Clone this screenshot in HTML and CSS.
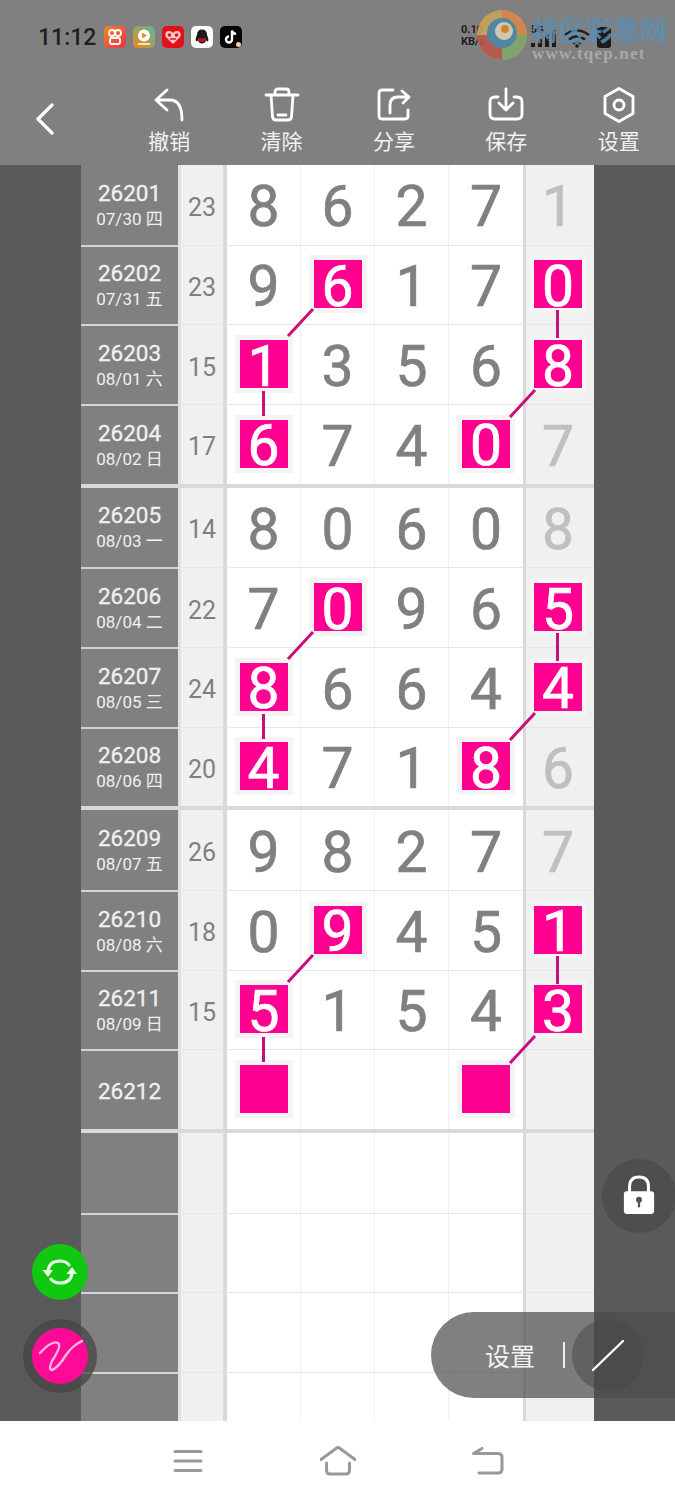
FILE: index.html
```html
<!DOCTYPE html>
<html lang="zh-CN">
<head>
  <meta charset="UTF-8">
  <title>排列走势图</title>
  <link rel="stylesheet" href="styles.css">
</head>
<body>
<div class="screen">

  <header class="topbar">
    <div class="statusbar">
      <span class="clock">11:12</span>
      <div class="app-icons">
        <svg class="app-icon" viewBox="0 0 22 22"><defs><linearGradient id="ks" x1="0" y1="0" x2="1" y2="1"><stop offset="0" stop-color="#f08a1d"/><stop offset="1" stop-color="#ee2b4f"/></linearGradient></defs><rect width="22" height="22" rx="5" fill="url(#ks)"/><circle cx="8" cy="7" r="3" fill="none" stroke="#fff" stroke-width="1.8"/><circle cx="14" cy="7" r="3" fill="none" stroke="#fff" stroke-width="1.8"/><rect x="6" y="12" width="10" height="6" rx="1.5" fill="none" stroke="#fff" stroke-width="1.8"/></svg>
        <svg class="app-icon" viewBox="0 0 22 22"><defs><linearGradient id="vd" x1="0" y1="1" x2="1" y2="0"><stop offset="0" stop-color="#f08a1d"/><stop offset="1" stop-color="#55b8a0"/></linearGradient></defs><rect width="22" height="22" rx="5" fill="url(#vd)"/><circle cx="11" cy="9.5" r="6" fill="#fff"/><path d="M9 6.5l5 3-5 3z" fill="#ef8b25"/><rect x="5" y="17" width="12" height="2" fill="#fbe3a8"/></svg>
        <svg class="app-icon" viewBox="0 0 22 22"><rect width="22" height="22" rx="5" fill="#e3101c"/><path d="M11 18L3.5 10.5Q2.5 5 7 5Q10 5 11 7Q12 5 15 5Q19.5 5 18.5 10.5z" fill="#f7c9c9"/><circle cx="7.5" cy="9" r="1.8" fill="#e3101c"/><circle cx="14.5" cy="9" r="1.8" fill="#e3101c"/><path d="M8 13h6" stroke="#e3101c" stroke-width="1.5"/></svg>
        <svg class="app-icon" viewBox="0 0 22 22"><rect width="22" height="22" rx="5" fill="#fff"/><path d="M11 3.5Q16 3.5 16 9Q18 13 17 15.5L15 14.5Q14 17.500 11 17.500Q8 17.500 7 14.500L5 15.500Q4 13 6 9Q6 3.500 11 3.500z" fill="#1a1a1a"/><path d="M7 11.500Q11 13.500 15 11.500L15 15Q11 17 7 15z" fill="#b3162b"/></svg>
        <svg class="app-icon" viewBox="0 0 22 22"><rect width="22" height="22" rx="5" fill="#050505"/><path d="M12 4.500V13.500A3 3 0 1 1 9 10.500M12 4.500Q12.500 7.500 16 8" fill="none" stroke="#fff" stroke-width="2.400"/><circle cx="18.500" cy="18.500" r="2.500" fill="#f2c9b0"/></svg>
      </div>
      <div class="status-right">
        <span class="netspeed">0.10<br>KB/s</span>
        <span class="fiveg">5G</span>
        <svg class="signal" viewBox="0 0 28 20"><path d="M2 19v-4M9 19v-8M16 19v-12M23 19v-17" stroke="#1c1c1c" stroke-width="4"/></svg>
        <svg class="wifi" viewBox="0 0 28 20"><path d="M2 7Q14-2 26 7M6 11.500Q14 5 22 11.500M10 15.500Q14 12 18 15.500" fill="none" stroke="#1c1c1c" stroke-width="2.600"/><circle cx="14" cy="18" r="1.800" fill="#1c1c1c"/></svg>
        <span class="battery"></span>
      </div>
      <div class="watermark">
        <svg class="wm-logo" viewBox="0 0 52 52"><circle cx="26" cy="26" r="25" fill="#c9a35a"/><path d="M26 1A25 25 0 0 1 51 26L26 26z" fill="#d8884a"/><path d="M1 26A25 25 0 0 0 26 51L26 26z" fill="#b85a4a"/><path d="M26 51A25 25 0 0 0 51 26L26 26z" fill="#7fa86a"/><circle cx="26" cy="24" r="15" fill="#4f86a8"/><circle cx="28" cy="22" r="9" fill="#d9d0b4"/><circle cx="29" cy="20" r="4" fill="#d9862a"/></svg>
        <div class="wm-text">
          <span class="wm-title">特区彩票网</span>
          <span class="wm-url">www.tqep.net</span>
        </div>
      </div>
    </div>

    <nav class="toolbar">
      <div class="back">
        <svg viewBox="0 0 20 32" class="back-icon"><path d="M17 2L3 16l14 14" fill="none" stroke="#fff" stroke-width="3.200" stroke-linecap="round" stroke-linejoin="round"/></svg>
      </div>
      <div class="tool">
        <svg class="tool-icon" viewBox="0 0 36 36"><path d="M16 3L5 13l11 10M5 13H19Q31 13 31 33"/></svg>
        <span>撤销</span>
      </div>
      <div class="tool">
        <svg class="tool-icon" viewBox="0 0 36 36"><path d="M2 8H34M11 8V5Q11 2 14 2H22Q25 2 25 5V8M7 8L8.500 30Q9 33 12 33H24Q27 33 27.500 30L29 8M14 28H22"/></svg>
        <span>清除</span>
      </div>
      <div class="tool">
        <svg class="tool-icon" viewBox="0 0 36 36"><path d="M17 3H6Q3 3 3 6V29Q3 32 6 32H29Q32 32 32 29V23M14 26V18Q14 10 22 10H32M26 4L33 10L27 16"/></svg>
        <span>分享</span>
      </div>
      <div class="tool">
        <svg class="tool-icon" viewBox="0 0 36 36"><path d="M10 10H7Q2 10 2 15V27Q2 32 7 32H29Q34 32 34 27V15Q34 10 29 10H26M18 2V22M11 16L18 23L25 16"/></svg>
        <span>保存</span>
      </div>
      <div class="tool">
        <svg class="tool-icon" viewBox="0 0 36 36"><path d="M18 1.500L32 9.500V26.500L18 34.500L4 26.500V9.500z"/><circle cx="18" cy="18" r="5"/></svg>
        <span>设置</span>
      </div>
    </nav>
  </header>

  <main class="board">
    <div class="sheet">

      <section class="group">
        <div class="row">
          <div class="date"><b>26201</b><small>07/30 四</small></div><div class="sum">23</div>
          <div class="cell">8</div><div class="cell">6</div><div class="cell">2</div><div class="cell">7</div>
          <div class="extra faint">1</div>
        </div>
        <div class="row">
          <div class="date"><b>26202</b><small>07/31 五</small></div><div class="sum">23</div>
          <div class="cell">9</div><div class="cell"><span class="hit">6</span></div><div class="cell">1</div><div class="cell">7</div>
          <div class="extra"><span class="hit">0</span></div>
        </div>
        <div class="row">
          <div class="date"><b>26203</b><small>08/01 六</small></div><div class="sum">15</div>
          <div class="cell"><span class="hit">1</span></div><div class="cell">3</div><div class="cell">5</div><div class="cell">6</div>
          <div class="extra"><span class="hit">8</span></div>
        </div>
        <div class="row">
          <div class="date"><b>26204</b><small>08/02 日</small></div><div class="sum">17</div>
          <div class="cell"><span class="hit">6</span></div><div class="cell">7</div><div class="cell">4</div><div class="cell"><span class="hit">0</span></div>
          <div class="extra faint">7</div>
        </div>
      </section>

      <section class="group">
        <div class="row">
          <div class="date"><b>26205</b><small>08/03 一</small></div><div class="sum">14</div>
          <div class="cell">8</div><div class="cell">0</div><div class="cell">6</div><div class="cell">0</div>
          <div class="extra faint">8</div>
        </div>
        <div class="row">
          <div class="date"><b>26206</b><small>08/04 二</small></div><div class="sum">22</div>
          <div class="cell">7</div><div class="cell"><span class="hit">0</span></div><div class="cell">9</div><div class="cell">6</div>
          <div class="extra"><span class="hit">5</span></div>
        </div>
        <div class="row">
          <div class="date"><b>26207</b><small>08/05 三</small></div><div class="sum">24</div>
          <div class="cell"><span class="hit">8</span></div><div class="cell">6</div><div class="cell">6</div><div class="cell">4</div>
          <div class="extra"><span class="hit">4</span></div>
        </div>
        <div class="row">
          <div class="date"><b>26208</b><small>08/06 四</small></div><div class="sum">20</div>
          <div class="cell"><span class="hit">4</span></div><div class="cell">7</div><div class="cell">1</div><div class="cell"><span class="hit">8</span></div>
          <div class="extra faint">6</div>
        </div>
      </section>

      <section class="group">
        <div class="row">
          <div class="date"><b>26209</b><small>08/07 五</small></div><div class="sum">26</div>
          <div class="cell">9</div><div class="cell">8</div><div class="cell">2</div><div class="cell">7</div>
          <div class="extra faint">7</div>
        </div>
        <div class="row">
          <div class="date"><b>26210</b><small>08/08 六</small></div><div class="sum">18</div>
          <div class="cell">0</div><div class="cell"><span class="hit">9</span></div><div class="cell">4</div><div class="cell">5</div>
          <div class="extra"><span class="hit">1</span></div>
        </div>
        <div class="row">
          <div class="date"><b>26211</b><small>08/09 日</small></div><div class="sum">15</div>
          <div class="cell"><span class="hit">5</span></div><div class="cell">1</div><div class="cell">5</div><div class="cell">4</div>
          <div class="extra"><span class="hit">3</span></div>
        </div>
        <div class="row">
          <div class="date"><b>26212</b></div><div class="sum"></div>
          <div class="cell"><span class="hit"></span></div><div class="cell"></div><div class="cell"></div><div class="cell"><span class="hit"></span></div>
          <div class="extra"></div>
        </div>
      </section>

      <section class="group">
        <div class="row"><div class="date"></div><div class="sum"></div><div class="cell"></div><div class="cell"></div><div class="cell"></div><div class="cell"></div><div class="extra"></div></div>
        <div class="row"><div class="date"></div><div class="sum"></div><div class="cell"></div><div class="cell"></div><div class="cell"></div><div class="cell"></div><div class="extra"></div></div>
        <div class="row"><div class="date"></div><div class="sum"></div><div class="cell"></div><div class="cell"></div><div class="cell"></div><div class="cell"></div><div class="extra"></div></div>
        <div class="row"><div class="date"></div><div class="sum"></div><div class="cell"></div><div class="cell"></div><div class="cell"></div><div class="cell"></div><div class="extra"></div></div>
      </section>

      <!-- lines between the picked numbers, same shape in each group -->
      <svg class="links" viewBox="0 0 513 1256">
        <defs>
          <g id="link-set">
            <path d="M232 144L207 171M182.500 226V251M476.500 145V173M454 225L429 252"/>
          </g>
        </defs>
        <use href="#link-set"/>
        <use href="#link-set" y="323"/>
        <use href="#link-set" y="646"/>
      </svg>
    </div>

    <div class="float-btn refresh">
      <svg viewBox="0 0 56 56" class="float-icon"><path d="M16 27Q17 17 28 17Q34 17 37 21M40 29Q39 39 28 39Q22 39 19 35" fill="none" stroke="#e8ffe8" stroke-width="3" stroke-linecap="round"/><path d="M10.500 26H21L16 33zM34.500 30H45L40 23z" fill="#e8ffe8"/></svg>
    </div>
    <div class="float-btn pen">
      <svg viewBox="0 0 56 56" class="float-icon"><path d="M8 25Q20 12 26 15Q30 18 20 33Q16 42 20 42Q26 40 34 27Q40 18 50 13" fill="none" stroke="#ffb5df" stroke-width="2.400" stroke-linecap="round"/></svg>
    </div>
    <div class="float-btn lock">
      <svg viewBox="0 0 36 44" class="lock-icon"><path d="M8 19V12Q8 2 18 2Q28 2 28 12V19" fill="none" stroke="#fff" stroke-width="3.200"/><rect x="2" y="17" width="32" height="24" rx="3" fill="#fff"/><circle cx="18" cy="26" r="3.200" fill="#555"/><rect x="16.800" y="27" width="2.400" height="7" fill="#555"/></svg>
    </div>
    <div class="pill">
      <span class="pill-label">设置</span>
      <span class="pill-sep"></span>
      <span class="pill-circle">
        <svg viewBox="0 0 34 34" class="pill-icon"><path d="M2 32L32 3" stroke="#fff" stroke-width="2.400" stroke-linecap="round"/></svg>
      </span>
    </div>
  </main>

  <footer class="navbar">
    <div class="nav-item">
      <svg viewBox="0 0 30 24" class="nav-icon nav-menu"><path d="M2 2.500H28M2 12H28M2 21.500H28"/></svg>
    </div>
    <div class="nav-item">
      <svg viewBox="0 0 36 30" class="nav-icon nav-home"><path d="M1 13.500L18 1L35 13.500M6.500 17V24Q6.500 28 10 28H26Q29.500 28 29.500 24V17"/></svg>
    </div>
    <div class="nav-item">
      <svg viewBox="0 0 32 28" class="nav-icon nav-back"><path d="M1.500 6.500H26Q30 6.500 30 10.500V22Q30 26 26 26H7M1.500 6.500L10 1.500"/></svg>
    </div>
  </footer>

</div>
</body>
</html>
```

FILE: styles.css
```css
* {
  box-sizing: border-box;
}
body {
  margin: 0;
  background: #5a5a5a;
  font-family: Roboto, "Noto Sans CJK SC", sans-serif;
}
.screen {
  width: 675px;
  height: 1500px;
  display: flex;
  flex-direction: column;
  overflow: hidden;
}

/* top bar */
.topbar {
  height: 165px;
  background: #808080;
  flex: none;
}
.statusbar {
  height: 75px;
  padding: 26px 0 0 38px;
  display: flex;
  align-items: flex-start;
  position: relative;
}
.clock {
  font-size: 23px;
  font-weight: 500;
  line-height: 23px;
  color: #1e1e1e;
  width: 66px;
}
.app-icons {
  display: flex;
  gap: 7px;
}
.app-icon {
  width: 22px;
  height: 22px;
  display: block;
}
.status-right {
  position: absolute;
  left: 461px;
  top: 24px;
  display: flex;
  align-items: flex-end;
}
.netspeed {
  width: 44px;
  font-size: 11px;
  font-weight: 700;
  line-height: 12px;
  color: #1c1c1c;
}
.fiveg {
  position: absolute;
  left: 70px;
  top: 0;
  font-size: 10px;
  font-weight: 700;
  color: #1c1c1c;
}
.signal {
  width: 28px;
  height: 20px;
  margin: 0 4px 0 26px;
}
.wifi {
  width: 28px;
  height: 20px;
}
.battery {
  width: 14px;
  height: 21px;
  margin-left: 6px;
  border-radius: 3px;
  background: #1c1c1c;
}
.watermark {
  position: absolute;
  left: 476px;
  top: 9px;
  display: flex;
  gap: 4px;
}
.wm-logo {
  width: 52px;
  height: 52px;
  opacity: .9;
}
.wm-text {
  display: flex;
  flex-direction: column;
  padding-top: 6px;
}
.wm-title {
  font-size: 27px;
  line-height: 30px;
  font-weight: 700;
  color: #5a8fb4;
  opacity: .85;
  font-family: "Noto Sans CJK SC", sans-serif;
}
.wm-url {
  font-family: "Liberation Serif", serif;
  font-size: 17px;
  font-weight: 700;
  line-height: 18px;
  letter-spacing: 1.200px;
  color: #a9a9a9;
}
.toolbar {
  height: 90px;
  display: flex;
}
.back {
  width: 113px;
  padding: 28px 0 0 35px;
}
.back-icon {
  width: 20px;
  height: 32px;
  display: block;
}
.tool {
  width: 112.400px;
  padding-top: 12px;
  display: flex;
  flex-direction: column;
  align-items: center;
  gap: 2px;
  color: #f2f2f2;
  font-size: 21px;
  line-height: 30px;
  font-family: "Noto Sans CJK SC", sans-serif;
}
.tool-icon {
  width: 36px;
  height: 36px;
  fill: none;
  stroke: #fff;
  stroke-width: 2.800;
  stroke-linecap: round;
  stroke-linejoin: round;
}

/* the chart */
.board {
  flex: 1;
  min-height: 0;
  position: relative;
  background: #5a5a5a;
}
.sheet {
  position: relative;
  width: 513px;
  height: 100%;
  margin-left: 81px;
  overflow: hidden;
}
.group {
  height: 322.670px;
  display: grid;
  grid-template-rows: repeat(4, 1fr);
  border-bottom: 4px solid #d9d9d9;
}
.row {
  display: grid;
  grid-template-columns: 97px 49px repeat(4, 74px) 71px;
  min-height: 0;
}
.row + .row > div {
  border-top: 1px solid #e6e6e6;
}
.row + .row > .date {
  border-top: 2px solid #d4d4d4;
}
.date {
  background: #808080;
  color: #f0f0f0;
  display: flex;
  flex-direction: column;
  align-items: center;
  justify-content: center;
  padding-top: 2px;
}
.date b {
  font-size: 22.500px;
  font-weight: 400;
  line-height: 27px;
  -webkit-text-stroke: .3px #f0f0f0;
}
.date small {
  font-size: 17px;
  line-height: 25px;
}
.sum {
  background: #f0f0f0;
  color: #808080;
  font-size: 25px;
  display: flex;
  align-items: center;
  justify-content: center;
  padding-top: 5px;
  border-left: 3px solid #e2e2e2;
  border-right: 4px solid #d9d9d9;
}
.cell, .extra {
  display: flex;
  align-items: center;
  justify-content: center;
  font-size: 57px;
  line-height: 1;
  color: #808080;
  -webkit-text-stroke: .7px currentColor;
}
.cell {
  background: #fff;
  border-right: 1px solid #f0f0f0;
  padding-top: 4px;
}
.cell:nth-child(6) {
  border-right: 0;
}
.extra {
  background: #f0f0f0;
  border-left: 3px solid #d9d9d9;
  padding: 4px 4px 0 0;
}
.extra.faint {
  color: #c0c0c0;
}
.hit {
  width: 58px;
  height: 58px;
  margin-top: -5px;
  border: 5px solid #f4f4f4;
  background: #ff0090;
  background-clip: padding-box;
  color: #fff;
  display: flex;
  align-items: center;
  justify-content: center;
  padding-top: 4px;
}
.links {
  position: absolute;
  left: 0;
  top: 0;
  width: 513px;
  height: 1256px;
  fill: none;
  stroke: #c8107a;
  stroke-width: 3;
}

/* floating buttons */
.float-btn {
  position: absolute;
  border-radius: 50%;
  display: flex;
  align-items: center;
  justify-content: center;
}
.float-icon {
  width: 56px;
  height: 56px;
}
.refresh {
  left: 32px;
  top: 1079px;
  width: 56px;
  height: 56px;
  background: #0fc80f;
}
.pen {
  left: 32px;
  top: 1163px;
  width: 56px;
  height: 56px;
  background: #ff0a96;
  box-shadow: 0 0 0 9px rgba(70, 70, 70, .75);
}
.lock {
  left: 602px;
  top: 994px;
  width: 74px;
  height: 74px;
  background: rgba(70, 70, 70, .6);
}
.lock-icon {
  width: 34px;
  height: 42px;
}
.pill {
  position: absolute;
  left: 431px;
  top: 1147px;
  width: 244px;
  height: 86px;
  padding-left: 54px;
  border-radius: 43px 0 0 43px;
  background: rgba(76, 76, 76, .71);
  display: flex;
  align-items: center;
}
.pill-label {
  font-family: "Noto Sans CJK SC", sans-serif;
  font-size: 25px;
  color: #f2f2f2;
}
.pill-sep {
  width: 2px;
  height: 26px;
  margin-left: 28px;
  background: #eee;
}
.pill-circle {
  width: 72px;
  height: 72px;
  margin-left: 7px;
  border-radius: 50%;
  background: rgba(70, 70, 70, .5);
  display: flex;
  align-items: center;
  justify-content: center;
}
.pill-icon {
  width: 34px;
  height: 34px;
}

/* bottom nav */
.navbar {
  height: 79px;
  flex: none;
  background: #fff;
  display: flex;
  justify-content: center;
}
.nav-item {
  width: 150px;
  display: flex;
  align-items: center;
  justify-content: center;
}
.nav-icon {
  fill: none;
  stroke: #999;
  stroke-width: 3;
  stroke-linecap: round;
  stroke-linejoin: round;
}
.nav-menu {
  width: 30px;
  height: 24px;
}
.nav-home {
  width: 36px;
  height: 30px;
}
.nav-back {
  width: 32px;
  height: 28px;
}
```
